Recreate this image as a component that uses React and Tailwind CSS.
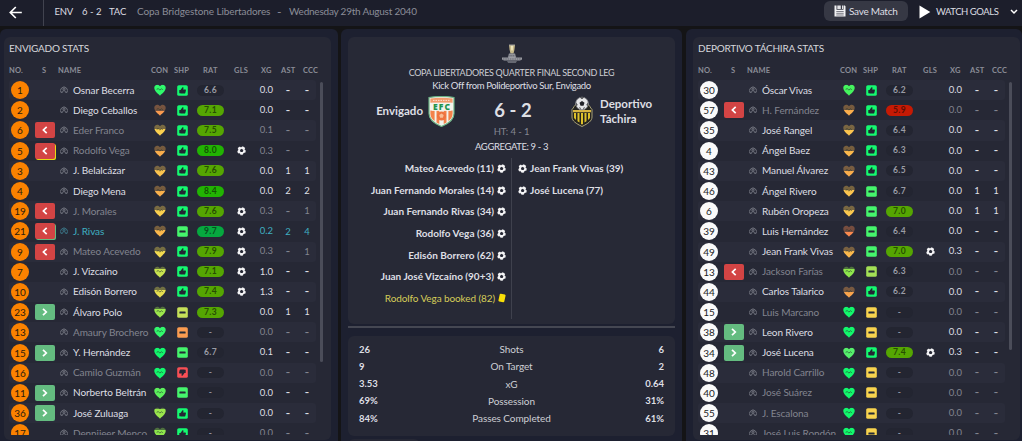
import { useId } from "react";
import clsx from "clsx";

// no, sub, name, condition colour, condition drained, sharpness, rating, goal, xg, ast, ccc, tone
const HOME = [
  [1, "", "Osnar Becerra", "#2ffa6c", 0, "up", "6.6", 0, "0.0", "-", "-", "on"],
  [2, "", "Diego Ceballos", "#f99a4f", 0.56, "up", "7.1", 0, "0.0", "-", "-", "on"],
  [6, "off", "Eder Franco", "#fbd04f", 0.4, "up", "7.5", 0, "0.1", "-", "-", "dim"],
  [5, "booked", "Rodolfo Vega", "#f9ad4c", 0.45, "up", "8.0", 1, "0.3", "-", "-", "dim"],
  [3, "", "J. Belalcázar", "#fbc44f", 0.42, "up", "7.6", 0, "0.0", "1", "1", "on"],
  [4, "", "Diego Mena", "#f9b04c", 0.45, "up", "8.4", 0, "0.0", "2", "2", "on"],
  [19, "off", "J. Morales", "#fbd04f", 0.4, "up", "7.6", 1, "0.3", "-", "1", "dim"],
  [21, "best", "J. Rivas", "#fbb84c", 0.42, "mid", "9.7", 1, "0.2", "2", "4", "me"],
  [9, "off", "Mateo Acevedo", "#f2da50", 0.36, "up", "7.9", 1, "0.3", "-", "1", "dim"],
  [7, "", "J. Vizcaíno", "#c8e34f", 0.25, "up", "7.1", 1, "1.0", "-", "-", "on"],
  [10, "", "Edisón Borrero", "#e5df50", 0.3, "up", "7.4", 1, "1.3", "-", "-", "on"],
  [23, "on", "Álvaro Polo", "#9ce64c", 0.18, "lime", "7.3", 0, "0.0", "1", "1", "on"],
  [13, "", "Amaury Brochero", "#32f86c", 0, "orange", "-", 0, "0.0", "-", "-", "dim"],
  [15, "on", "Y. Hernández", "#12f86c", 0, "mid", "6.7", 0, "0.1", "-", "-", "on"],
  [16, "", "Camilo Guzmán", "#12f86c", 0, "down", "-", 0, "0.0", "-", "-", "dim"],
  [11, "on", "Norberto Beltrán", "#5cf05c", 0, "mid", "-", 0, "0.0", "-", "-", "on"],
  [36, "on", "José Zuluaga", "#9ae64c", 0.1, "up", "-", 0, "0.0", "-", "-", "on"],
  [17, "", "Dennijeer Menco", "#8ee64c", 0.2, "up", "-", 0, "0.0", "-", "-", "dim"],
];

const AWAY = [
  [30, "", "Óscar Vivas", "#45f55e", 0, "up", "6.2", 0, "0.0", "-", "-", "on"],
  [57, "off", "H. Fernández", "#f9ad4c", 0.45, "up", "5.9", 0, "0.0", "-", "-", "dim"],
  [35, "", "José Rangel", "#fbc44f", 0.45, "up", "6.4", 0, "0.0", "-", "-", "on"],
  [4, "", "Ángel Baez", "#fbb84c", 0.45, "up", "6.3", 0, "0.0", "-", "-", "on"],
  [43, "", "Manuel Álvarez", "#f9ad4c", 0.45, "up", "6.5", 0, "0.0", "-", "-", "on"],
  [46, "", "Ángel Rivero", "#fbc44f", 0.42, "mid", "6.7", 0, "0.0", "1", "1", "on"],
  [6, "", "Rubén Oropeza", "#fbc84f", 0.4, "mid", "7.0", 0, "0.0", "1", "1", "on"],
  [39, "", "Luis Hernández", "#f98a4f", 0.58, "mid", "6.4", 0, "0.0", "-", "-", "on"],
  [49, "", "Jean Frank Vivas", "#fbb84c", 0.43, "mid", "7.0", 1, "0.3", "-", "-", "on"],
  [13, "off", "Jackson Farías", "#8ee64c", 0.2, "leaf", "6.3", 0, "0.0", "-", "-", "dim"],
  [44, "", "Carlos Talarico", "#f9a44c", 0.5, "up", "6.2", 0, "0.0", "-", "-", "on"],
  [15, "", "Luis Marcano", "#12f86c", 0, "yellow", "-", 0, "0.0", "-", "-", "dim"],
  [38, "on", "Leon Rivero", "#12f86c", 0, "yellow", "-", 0, "0.0", "-", "-", "on"],
  [34, "on", "José Lucena", "#55f06c", 0, "up", "7.4", 1, "0.3", "-", "-", "on"],
  [48, "", "Harold Carrillo", "#12f86c", 0, "yellow", "-", 0, "0.0", "-", "-", "dim"],
  [40, "", "José Suárez", "#12f86c", 0, "yellow", "-", 0, "0.0", "-", "-", "dim"],
  [55, "", "J. Escalona", "#12f86c", 0, "yellow", "-", 0, "0.0", "-", "-", "dim"],
  [31, "", "José Luis Rondón", "#12f86c", 0, "yellow", "-", 0, "0.0", "-", "-", "dim"],
];

const HOME_EVENTS = [
  "Mateo Acevedo (11)",
  "Juan Fernando Morales (14)",
  "Juan Fernando Rivas (34)",
  "Rodolfo Vega (36)",
  "Edisón Borrero (62)",
  "Juan José Vizcaíno (90+3)",
];

const AWAY_EVENTS = ["Jean Frank Vivas (39)", "José Lucena (77)"];

const MATCH_STATS = [
  ["26", "Shots", "6"],
  ["9", "On Target", "2"],
  ["3.53", "xG", "0.64"],
  ["69%", "Possession", "31%"],
  ["84%", "Passes Completed", "61%"],
];

const SHARPNESS = {
  up: "#14fa70",
  mid: "#45f56c",
  lime: "#c5e058",
  leaf: "#a3e055",
  orange: "#fb9c50",
  yellow: "#f8d34e",
  down: "#f94f55",
};

const GRID =
  "grid grid-cols-[23px_25px_14px_79px_20px_24px_33px_29px_17px_30px_8px] items-center";

function ratingClass(rating) {
  if (rating === "-") return "bg-[#232531] text-[#8f919b]";
  const value = parseFloat(rating);
  if (value >= 9) return "bg-[#06a83f] text-[#06501f]";
  if (value >= 8) return "bg-[#22b302] text-[#125402]";
  if (value >= 7) return "bg-[#55a602] text-[#274d02]";
  if (value < 6) return "bg-[#c61a04] text-[#5f0e04]";
  return "bg-[#232531] text-[#9a9ca5]";
}

function Heart({ color, drained }) {
  const id = useId();
  return (
    <svg width="12" height="12" viewBox="0 0 12 12" className="block">
      <defs>
        <linearGradient id={id} x1="0" y1="0" x2="0" y2="1">
          <stop offset={drained} stopColor={color} stopOpacity="0.38" />
          <stop offset={drained} stopColor={color} />
        </linearGradient>
      </defs>
      <path
        d="M6 11.7C4 9.6.3 7.2.3 3.800.3 2 1.600.7 3.200.7 4.400.7 5.500 1.300 6 2.300 6.500 1.300 7.600.7 8.800.7c1.600 0 2.900 1.300 2.900 3.100C11.700 7.200 8 9.600 6 11.700Z"
        fill={`url(#${id})`}
      />
      <path
        d="M2.600 5.300 4.400 4.600l1.400 1.500 1.600-1.300 1.400.9"
        fill="none"
        stroke="#26352f"
        strokeOpacity="0.75"
        strokeWidth="0.8"
      />
    </svg>
  );
}

function Sharpness({ kind }) {
  return (
    <svg width="11" height="11" viewBox="0 0 11 11" className="block">
      <rect x="0.2" y="0.2" width="10.6" height="10.6" rx="1.6" fill={SHARPNESS[kind]} />
      {kind === "up" || kind === "down" ? (
        <path
          d="M2.300 4.900h1.200l2-2.700c.8-.3 1.200.4.9 1.200l-.3 1h2c.7 0 .9.500.8 1l-.6 2.500c-.1.500-.4.700-.9.700H3.700l-.3-.3H2.300Z"
          fill="#242634"
          transform={kind === "down" ? "rotate(180 5.5 5.5)" : undefined}
        />
      ) : (
        <rect x="2.4" y="4.6" width="6.2" height="1.8" rx="0.5" fill="#252b36" />
      )}
    </svg>
  );
}

function Football({ className }) {
  return (
    <svg width="9" height="9" viewBox="0 0 18 18" className={className}>
      <circle cx="9" cy="9" r="8.600" fill="#f4f4f6" />
      <path d="m9.200 5.300 3.500 2.700-1.300 4.200H7l-1.300-4.200Z" fill="#272936" />
      <path
        d="M5 0h6L8 3.200ZM18 3v6.500l-3.200-3ZM17 18l-5-.2.600-3.200 3.600-1.500ZM3.500 18l3.300.5-.8-3.300-3.200-1.200ZM0 4v7l3-3.500Z"
        fill="#272936"
      />
    </svg>
  );
}

function Person({ me }) {
  return (
    <svg
      width="8"
      height="8"
      viewBox="0 0 16 16"
      fill="none"
      stroke={me ? "#3f7f91" : "#7c7e89"}
      strokeWidth="1.700"
      className="block"
    >
      <path d="M3 14A7 7 0 1 1 13 14" />
      <circle cx="8" cy="6.300" r="2.200" />
      <path d="M4.200 14v-2c0-1.500 1.400-2.400 3.800-2.400s3.800.9 3.800 2.400v2" />
    </svg>
  );
}

function SubBadge({ sub }) {
  if (!sub) return null;
  return (
    <span
      className={clsx(
        "flex h-4 w-5 items-center justify-center rounded-[2px]",
        sub === "on" ? "bg-[#64bc80]" : "bg-[#d34444]",
        sub === "booked" && "shadow-[1px_1px_0_#e8dc12]",
        sub === "best" && "shadow-[1px_1px_0_#64bc80]"
      )}
    >
      <svg width="8" height="8" viewBox="0 0 8 8" fill="none" stroke="#fff" strokeWidth="1.700">
        <path d={sub === "on" ? "m2 .8 3.300 3.200L2 7.200" : "M5.700.8 2.400 4l3.300 3.200"} />
      </svg>
    </span>
  );
}

function Count({ value, className }) {
  return (
    <span
      className={clsx(
        "text-center leading-none",
        value === "-" ? "text-[13px]" : "text-[9.5px]",
        className
      )}
    >
      {value}
    </span>
  );
}

function PlayerRow({ player, index, away }) {
  const [no, sub, name, color, drained, sharp, rating, goal, xg, ast, ccc, tone] = player;
  const text = clsx(
    tone === "on" && "text-[#dedfe4]",
    tone === "dim" && "text-[#82848f]",
    tone === "me" && "text-[#3fb0c2]"
  );
  return (
    <div
      className={clsx(
        GRID,
        "h-[20.2px] w-[307px] shrink-0 rounded-[3px]",
        index % 2 === 0 && "bg-[#2a2c3a]"
      )}
    >
      <span
        className={clsx(
          "ml-[2px] flex size-[18px] items-center justify-center rounded-full text-[10px] leading-none",
          away ? "bg-[#fafafa] text-[#1c1d24]" : "bg-[#fb8200] text-[#2c1c0c]"
        )}
      >
        {no}
      </span>
      <span className="pl-[2.5px]">
        <SubBadge sub={sub} />
      </span>
      <span className="pl-[3px]">
        <Person me={tone === "me"} />
      </span>
      <span className={clsx("whitespace-nowrap pl-[2px] text-[10px] tracking-[-0.1px]", text)}>
        {name}
      </span>
      <span className="flex justify-center">
        <Heart color={color} drained={drained} />
      </span>
      <span className="flex justify-center">
        <Sharpness kind={sharp} />
      </span>
      <span className="flex justify-center">
        <span
          className={clsx(
            "h-[11px] w-[27px] rounded-full text-center text-[8.5px] font-bold leading-[11px] tracking-[0.4px]",
            ratingClass(rating)
          )}
        >
          {rating}
        </span>
      </span>
      <span className="flex justify-center">{goal ? <Football /> : null}</span>
      <span className={clsx("whitespace-nowrap text-right text-[9.5px]", text)}>{xg}</span>
      <Count value={ast} className={text} />
      <Count value={ccc} className={text} />
    </div>
  );
}

function TeamStats({ title, players, away }) {
  return (
    <section
      className={clsx(
        "flex h-[412px] shrink-0 rounded-t-md bg-[#1d2030] pt-2",
        away ? "w-[336px] pl-[7px]" : "w-[338px] pl-1"
      )}
    >
      <div className="h-[403px] w-[327px] rounded-md bg-[#262835] pl-[5px]">
        <h2 className="pt-1 text-[10px] leading-[14px] tracking-[-0.23px] text-[#d6d7dc]">
          {title}
        </h2>
        <div className="mb-px mt-2 flex h-4 items-center text-[7.5px] font-bold tracking-[0.2px] text-[#8b8d97]">
          <span className="w-[33px]">NO.</span>
          <span className="w-4">S</span>
          <span className="w-[93px]">NAME</span>
          <span className="w-[23px]">CON</span>
          <span className="w-[29px]">SHP</span>
          <span className="w-[31px]">RAT</span>
          <span className="w-[27px]">GLS</span>
          <span className="w-[20px]">XG</span>
          <span className="w-[22px]">AST</span>
          <span>CCC</span>
        </div>
        <div className="flex">
          <div className="flex h-[355px] w-[307px] flex-col overflow-hidden">
            {players.map((player, i) => (
              <PlayerRow key={player[0]} player={player} index={i} away={away} />
            ))}
          </div>
          <div
            className={clsx(
              "ml-[4px] mt-[2px] w-[3px] rounded-full bg-[#4b4d59]",
              away ? "h-[268px]" : "h-[280px]"
            )}
          />
        </div>
      </div>
    </section>
  );
}

function Trophy() {
  return (
    <svg width="22" height="20" viewBox="0 0 22 20" className="block">
      <path d="M8 1h6l-.6 5-.9 3.500h-3L8.600 6Z" fill="#c6b98a" />
      <path d="M9.800 1.500h2.400l-.5 5h-1.400Z" fill="#efe5bd" />
      <path d="M8 .4h6v1H8Z" fill="#9c9c9c" />
      <path d="M8 9.500h6l1.200 3.500H6.800Z" fill="#8f9198" />
      <path d="M1 13.500h6l1-1h6l1 1h6v2l-2 1H3l-2-1Z" fill="#9a9ba2" />
      <path
        d="M2 15h18M7 11.800h8"
        stroke="#53555f"
        strokeWidth="0.8"
        strokeDasharray="1.500 .8"
      />
      <path d="M6 17.200h10l-1.200 1.600H7.200Z" fill="#7c7e87" />
    </svg>
  );
}

function EnvigadoCrest() {
  return (
    <svg width="27" height="31" viewBox="0 0 27 31" className="block">
      <path
        d="M1 1.500c8-1.300 17-1.300 25 0v16c0 6-5 10-12.500 13C6 27.500 1 23.500 1 17.500Z"
        fill="#f3f3ec"
        stroke="#6bb184"
        strokeWidth="1.2"
      />
      <path d="M2.400 2.600c7-1 15-1 22.200 0v4.200H2.400Z" fill="#f39a6c" />
      <path
        d="M2.400 14.500h4.200v10.500c-2.700-2-4.200-4.400-4.200-7.500ZM8.500 14.500h2.800V28l-2.800-1.500ZM15.700 14.500h2.800v12L15.700 28ZM20.400 14.500h4.200v3c0 3.100-1.500 5.500-4.200 7.500Z"
        fill="#f4824a"
      />
      <circle cx="13.500" cy="20" r="4.600" fill="#ee7440" />
      <path d="m13.500 17.500 2.200 1.600-.8 2.600h-2.800l-.8-2.600Z" fill="#f9bd94" />
      <path d="M5 4.400h17" stroke="#fbe0d0" strokeWidth="1" strokeDasharray="1.500 1" />
      <rect x="3.600" y="6.800" width="19.800" height="8" fill="#f3f3ec" />
      <text
        x="13.500"
        y="13.800"
        textAnchor="middle"
        fontFamily="Open Sans, sans-serif"
        fontWeight="800"
        fontSize="8.5"
        textLength="17"
        fill="#22924e"
      >
        EFC
      </text>
    </svg>
  );
}

function TachiraCrest() {
  return (
    <svg width="22" height="31" viewBox="0 0 22 31" className="block">
      <path
        d="M1 13.500c2-2 2-4 4-5h12c2 1 2 3 4 5V21c0 4-4 6.500-10 9.500C5 27.500 1 25 1 21Z"
        fill="#25241f"
        stroke="#aaa27a"
        strokeWidth="1"
      />
      <path
        d="M3 17h2v7l-2-2ZM6.500 17h2v9.500l-2-1.300ZM10 17h2v11l-1 .6-1-.6ZM13.500 17h2v8.200l-2 1.300ZM17 17h2v5l-2 2Z"
        fill="#ddc02b"
      />
      <path d="M2 14h18v2.200H2Z" fill="#d8b540" />
      <circle cx="11" cy="7.500" r="6.300" fill="#e6e6e8" stroke="#8a8b90" strokeWidth="0.9" />
      <path
        d="m11 5 2.500 1.800-1 2.900h-3l-1-2.900ZM8.800 1.600h4.400L11 3ZM5 6.500l1.500 2-.8 2.200ZM17 6.500l-1.500 2 .8 2.200ZM7.800 11.300l1.700.5.200 1.700ZM14.200 11.300l-1.700.5-.2 1.700Z"
        fill="#202126"
      />
    </svg>
  );
}

function TopBar() {
  return (
    <header className="flex h-[26px] shrink-0 items-start bg-[#1c1e2b] text-[10px] leading-[23px]">
      <div className="flex h-[26px] w-[44px] items-center border-r border-[#41434f] pb-[2px] pl-[9px]">
        <svg width="13" height="13" viewBox="0 0 13 13" fill="none" stroke="#fff" strokeWidth="1.700">
          <path d="M12.800 6.500H1.500M6.800 1 1.300 6.500l5.500 5.500" />
        </svg>
      </div>
      <span className="w-[27px] pl-[10.5px] text-[9.5px] tracking-[-0.3px] text-[#dcdde2]">ENV</span>
      <span className="ml-[11px] w-[27px] whitespace-nowrap text-[9.5px] text-[#dcdde2]">6 - 2</span>
      <span className="w-[28px] text-[9.5px] tracking-[-0.1px] text-[#dcdde2]">TAC</span>
      <span className="w-[140px] whitespace-nowrap tracking-[-0.08px] text-[#8b8d98]">
        Copa Bridgestone Libertadores
      </span>
      <span className="w-3 text-[12px] text-[#8b8d98]">-</span>
      <span className="whitespace-nowrap tracking-[-0.22px] text-[#8b8d98]">
        Wednesday 29th August 2040
      </span>
      <div className="ml-auto flex">
        <button className="mt-px flex h-5 w-[84px] items-center rounded-md bg-[#363844] pl-[10px] leading-none text-[#dedfe4]">
          <svg width="12" height="12" viewBox="0 0 12 12" className="mr-[3px]">
            <path d="M.5.500h2v4.300h7V.500h1.300l.7.700v10.300H.5Z" fill="#f2f2f4" />
            <path d="M3.300.500h3.500v3.500H3.300ZM8 .5h1v3.500H8Z" fill="#e2e2e6" />
            <path d="M2.300 6.500h7.400M2.300 8.300h7.400M2.300 10h7.400" stroke="#4a4c57" strokeWidth="0.7" />
          </svg>
          <span className="whitespace-nowrap tracking-[-0.25px]">Save Match</span>
        </button>
        <svg width="12" height="14" viewBox="0 0 12 14" className="ml-[11px] mt-[5px]">
          <path d="M.5.500 11.300 7 .5 13.500Z" fill="#fff" />
        </svg>
        <span className="ml-[5px] w-[74px] whitespace-nowrap text-[9.5px] tracking-[-0.45px] text-[#dcdde2]">
          WATCH GOALS
        </span>
        <svg
          width="8"
          height="6"
          viewBox="0 0 8 6"
          className="mr-[4px] mt-[9px]"
          fill="none"
          stroke="#fff"
          strokeWidth="1.5"
        >
          <path d="m1 1 3 3 3-3" />
        </svg>
      </div>
    </header>
  );
}

function MatchCentre() {
  return (
    <section className="flex h-[412px] w-[341px] shrink-0 flex-col overflow-hidden rounded-t-md bg-[#1d2030] pl-[7px] pt-2 text-[#dedfe4]">
      <div className="flex h-[287px] w-[327px] shrink-0 flex-col items-center rounded-md bg-[#272936]">
        <div className="mt-[7px]">
          <Trophy />
        </div>
        <p className="mt-[2px] whitespace-nowrap text-[9px] leading-[13px] tracking-[-0.31px] text-[#cdced4]">
          COPA LIBERTADORES QUARTER FINAL SECOND LEG
        </p>
        <p className="whitespace-nowrap text-[9.5px] leading-[14px] tracking-[-0.36px]">
          Kick Off from Polideportivo Sur, Envigado
        </p>
        <div className="mt-[2px] flex h-[32px] w-full items-center">
          <span className="w-[75px] whitespace-nowrap text-right text-[11.5px] font-bold leading-[15px]">
            <span className="relative -top-px">Envigado</span>
          </span>
          <div className="ml-[5px]">
            <EnvigadoCrest />
          </div>
          <span className="w-[116px] pb-[2px] text-center text-[18.5px] font-bold leading-none">
            6 - 2
          </span>
          <TachiraCrest />
          <span className="ml-[7px] pb-px text-[11.5px] font-bold leading-[15px]">
            Deportivo
            <br />
            Táchira
          </span>
        </div>
        <p className="text-[9.5px] leading-[10px] tracking-[-0.1px] text-[#858792]">HT: 4 - 1</p>
        <p className="mt-[3px] text-[9.5px] leading-[14px] tracking-[-0.4px]">AGGREGATE: 9 - 3</p>
        <div className="mt-[4px] flex h-[161px] w-full text-[10px] font-bold">
          <div className="flex w-[164px] flex-col items-end border-r border-[#3f414d] pr-[5px]">
            {HOME_EVENTS.map((event) => (
              <div key={event} className="flex h-[21.6px] items-center whitespace-nowrap">
                {event}
                <Football className="ml-[3px]" />
              </div>
            ))}
            <div className="flex h-[21.6px] items-center whitespace-nowrap font-normal tracking-[-0.1px] text-[#d5cc58]">
              Rodolfo Vega booked (82)
              <span className="ml-[4px] mr-px h-2 w-[6px] rotate-12 rounded-[1px] bg-[#f9df08]" />
            </div>
          </div>
          <div className="pl-[6px]">
            {AWAY_EVENTS.map((event) => (
              <div key={event} className="flex h-[21.6px] items-center whitespace-nowrap">
                <Football className="mr-[3px]" />
                {event}
              </div>
            ))}
          </div>
        </div>
      </div>
      <div className="mt-[2px] h-[2px] w-[327px] shrink-0 bg-[#454752]" />
      <div className="mt-2 h-[100px] w-[327px] shrink-0 rounded-md bg-[#262835] px-[11px] pt-[5px]">
        {MATCH_STATS.map(([home, label, away]) => (
          <div
            key={label}
            className="grid h-[17.3px] grid-cols-[1fr_auto_1fr] items-center text-[9.5px]"
          >
            <span className="font-bold">{home}</span>
            <span className="text-[10px] tracking-[-0.08px] text-[#cdced4]">{label}</span>
            <span className="text-right font-bold">{away}</span>
          </div>
        ))}
      </div>
      <div className="mt-[3px] h-3 w-[72px] shrink-0 rounded-md bg-[#262835]" />
    </section>
  );
}

export default function App() {
  return (
    <div className="flex h-[441px] w-[1022px] flex-col overflow-hidden bg-[#141416] font-['Lato',sans-serif]">
      <TopBar />
      <main className="mt-[3px] flex">
        <TeamStats title="ENVIGADO STATS" players={HOME} />
        <div className="ml-[3px] mr-[4px]">
          <MatchCentre />
        </div>
        <TeamStats title="DEPORTIVO TÁCHIRA STATS" players={AWAY} away />
      </main>
    </div>
  );
}
